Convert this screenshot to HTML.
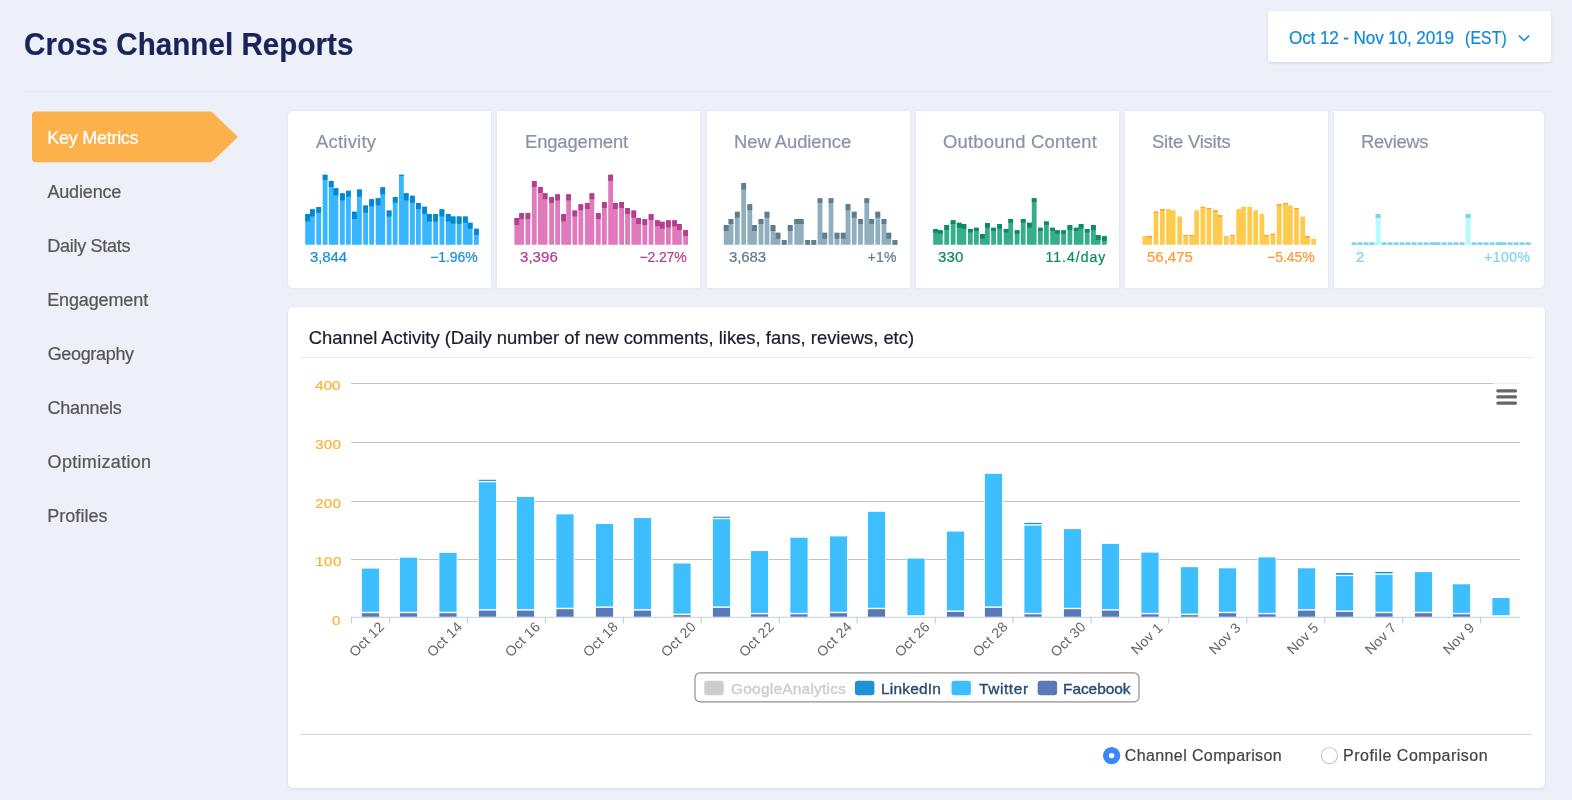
<!DOCTYPE html>
<html lang="en"><head><meta charset="utf-8"><title>Cross Channel Reports</title>
<style>
html,body{margin:0;padding:0;}
body{width:1572px;height:800px;overflow:hidden;background:#edf0f8;font-family:"Liberation Sans", sans-serif;position:relative;}
.t{position:absolute;white-space:nowrap;line-height:1;-webkit-text-stroke:0.22px;}
#tx{position:absolute;left:0;top:0;width:1572px;height:800px;will-change:transform;}
.abs{position:absolute;}
.card{position:absolute;background:#fff;box-shadow:0 0 3px rgba(0,0,0,.07);}
svg{position:absolute;left:0;top:0;overflow:visible;will-change:transform;}
svg text{font-family:"Liberation Sans", sans-serif;}
</style></head><body>
<div class="abs" style="left:25px;top:91px;width:1526px;height:1px;background:#e1e3e8;"></div>
<div class="card" style="left:1268px;top:11px;width:283px;height:51px;border-radius:3px;box-shadow:0 1px 3px rgba(0,0,0,.13);"></div>
<div class="card" style="left:287.9px;top:110.7px;width:203.5px;height:177.4px;border-radius:5px 0 0 5px;"></div>
<div class="card" style="left:497.1px;top:110.7px;width:203.3px;height:177.4px;border-radius:0;"></div>
<div class="card" style="left:706.5px;top:110.7px;width:203.3px;height:177.4px;border-radius:0;"></div>
<div class="card" style="left:915.9px;top:110.7px;width:203.3px;height:177.4px;border-radius:0;"></div>
<div class="card" style="left:1125.2px;top:110.7px;width:203.2px;height:177.4px;border-radius:0;"></div>
<div class="card" style="left:1334.4px;top:110.7px;width:209.6px;height:177.4px;border-radius:0 5px 5px 0;"></div>
<div class="card" style="left:287.9px;top:306.5px;width:1257.0px;height:481px;border-radius:5px;box-shadow:0 1px 3px rgba(0,0,0,.10);"></div>
<div class="abs" style="left:300.5px;top:357px;width:1232px;height:1.2px;background:#e3e8fb;"></div>
<div class="abs" style="left:300.2px;top:733.5px;width:1232.3px;height:1px;background:#d6d6d6;"></div>
<svg width="1572" height="800" viewBox="0 0 1572 800">
<path d="M36 111.6H209.8Q211.8 111.6 213.1 113L238 136.9L213.1 160.8Q211.8 162.2 209.8 162.2H36Q32 162.2 32 158.2V115.6Q32 111.6 36 111.6Z" fill="#fcb14b"/>
<path d="M1519 35.6L1524.1 40.5L1529.2 35.6" fill="none" stroke="#0e8ad8" stroke-width="1.5"/>
<path fill="#38b6ff" d="M309.4 221.5h1.2V244.8h-1.2zM305.2 214.0h4.8V244.8h-4.8zM310.0 209.2h4.8V244.8h-4.8zM316.3 207.0h4.8V244.8h-4.8zM322.7 174.8h4.8V244.8h-4.8zM333.0 195.5h1.2V244.8h-1.2zM328.8 181.0h4.8V244.8h-4.8zM333.5 188.3h4.8V244.8h-4.8zM340.0 193.2h4.8V244.8h-4.8zM346.0 190.8h4.8V244.8h-4.8zM356.2 219.0h1.2V244.8h-1.2zM352.0 211.7h4.8V244.8h-4.8zM357.0 189.5h4.8V244.8h-4.8zM363.2 205.5h4.8V244.8h-4.8zM369.2 199.3h4.8V244.8h-4.8zM379.9 205.2h1.2V244.8h-1.2zM375.7 198.3h4.8V244.8h-4.8zM380.3 187.2h4.8V244.8h-4.8zM386.7 210.5h4.8V244.8h-4.8zM392.8 197.0h4.8V244.8h-4.8zM403.2 200.5h1.2V244.8h-1.2zM399.0 174.8h4.8V244.8h-4.8zM403.8 193.2h4.8V244.8h-4.8zM410.0 195.8h4.8V244.8h-4.8zM416.0 203.0h4.8V244.8h-4.8zM426.4 221.5h1.2V244.8h-1.2zM422.2 206.8h4.8V244.8h-4.8zM427.0 214.0h4.8V244.8h-4.8zM433.2 214.0h4.8V244.8h-4.8zM439.5 209.2h4.8V244.8h-4.8zM450.0 223.8h1.2V244.8h-1.2zM445.8 214.0h4.8V244.8h-4.8zM450.7 216.5h4.8V244.8h-4.8zM456.8 216.5h4.8V244.8h-4.8zM467.2 228.8h1.2V244.8h-1.2zM463.0 216.5h4.8V244.8h-4.8zM467.8 222.8h4.8V244.8h-4.8zM474.0 228.8h4.8V244.8h-4.8z"/>
<path fill="#0288d1" d="M305.2 214.0h4.8V221.5h-4.8zM310.0 209.2h4.8V216.5h-4.8zM316.3 207.0h4.8V213.0h-4.8zM322.7 174.8h4.8V180.0h-4.8zM328.8 181.0h4.8V187.0h-4.8zM333.5 188.3h4.8V195.5h-4.8zM340.0 193.2h4.8V200.5h-4.8zM346.0 190.8h4.8V196.8h-4.8zM352.0 211.7h4.8V219.0h-4.8zM357.0 189.5h4.8V196.8h-4.8zM363.2 205.5h4.8V212.8h-4.8zM369.2 199.3h4.8V206.5h-4.8zM375.7 198.3h4.8V205.2h-4.8zM380.3 187.2h4.8V194.3h-4.8zM386.7 210.5h4.8V216.5h-4.8zM392.8 197.0h4.8V202.8h-4.8zM399.0 174.8h4.8V176.0h-4.8zM403.8 193.2h4.8V200.5h-4.8zM410.0 195.8h4.8V202.8h-4.8zM416.0 203.0h4.8V209.0h-4.8zM422.2 206.8h4.8V214.0h-4.8zM427.0 214.0h4.8V221.5h-4.8zM433.2 214.0h4.8V221.5h-4.8zM439.5 209.2h4.8V216.5h-4.8zM445.8 214.0h4.8V221.5h-4.8zM450.7 216.5h4.8V223.8h-4.8zM456.8 216.5h4.8V223.8h-4.8zM463.0 216.5h4.8V222.8h-4.8zM467.8 222.8h4.8V228.8h-4.8zM474.0 228.8h4.8V235.0h-4.8z"/>
<path fill="#e07abd" d="M518.6 225.0h1.2V244.8h-1.2zM514.4 218.0h4.8V244.8h-4.8zM519.2 213.0h4.8V244.8h-4.8zM525.5 213.0h4.8V244.8h-4.8zM531.9 181.0h4.8V244.8h-4.8zM542.2 199.3h1.2V244.8h-1.2zM538.0 187.0h4.8V244.8h-4.8zM542.7 193.2h4.8V244.8h-4.8zM549.2 197.0h4.8V244.8h-4.8zM555.2 194.3h4.8V244.8h-4.8zM565.4 221.5h1.2V244.8h-1.2zM561.2 214.0h4.8V244.8h-4.8zM566.2 194.3h4.8V244.8h-4.8zM572.4 210.5h4.8V244.8h-4.8zM578.4 204.3h4.8V244.8h-4.8zM589.1 209.0h1.2V244.8h-1.2zM584.9 203.0h4.8V244.8h-4.8zM589.5 193.2h4.8V244.8h-4.8zM595.9 213.0h4.8V244.8h-4.8zM602.0 202.0h4.8V244.8h-4.8zM612.4 209.0h1.2V244.8h-1.2zM608.2 174.8h4.8V244.8h-4.8zM613.0 203.0h4.8V244.8h-4.8zM619.2 202.0h4.8V244.8h-4.8zM625.2 208.0h4.8V244.8h-4.8zM635.6 224.0h1.2V244.8h-1.2zM631.4 210.5h4.8V244.8h-4.8zM636.2 218.0h4.8V244.8h-4.8zM642.4 219.0h4.8V244.8h-4.8zM648.7 214.0h4.8V244.8h-4.8zM659.2 228.8h1.2V244.8h-1.2zM655.0 220.3h4.8V244.8h-4.8zM659.9 221.8h4.8V244.8h-4.8zM666.0 220.3h4.8V244.8h-4.8zM676.4 230.0h1.2V244.8h-1.2zM672.2 220.3h4.8V244.8h-4.8zM677.0 224.0h4.8V244.8h-4.8zM683.2 230.0h4.8V244.8h-4.8z"/>
<path fill="#b2408f" d="M514.4 218.0h4.8V225.0h-4.8zM519.2 213.0h4.8V219.0h-4.8zM525.5 213.0h4.8V219.0h-4.8zM531.9 181.0h4.8V187.0h-4.8zM538.0 187.0h4.8V193.0h-4.8zM542.7 193.2h4.8V199.3h-4.8zM549.2 197.0h4.8V203.0h-4.8zM555.2 194.3h4.8V200.5h-4.8zM561.2 214.0h4.8V221.5h-4.8zM566.2 194.3h4.8V200.5h-4.8zM572.4 210.5h4.8V216.5h-4.8zM578.4 204.3h4.8V210.3h-4.8zM584.9 203.0h4.8V209.0h-4.8zM589.5 193.2h4.8V199.3h-4.8zM595.9 213.0h4.8V219.0h-4.8zM602.0 202.0h4.8V208.0h-4.8zM608.2 174.8h4.8V181.0h-4.8zM613.0 203.0h4.8V209.0h-4.8zM619.2 202.0h4.8V208.0h-4.8zM625.2 208.0h4.8V214.0h-4.8zM631.4 210.5h4.8V217.8h-4.8zM636.2 218.0h4.8V224.0h-4.8zM642.4 219.0h4.8V225.0h-4.8zM648.7 214.0h4.8V220.0h-4.8zM655.0 220.3h4.8V226.3h-4.8zM659.9 221.8h4.8V228.8h-4.8zM666.0 220.3h4.8V227.5h-4.8zM672.2 220.3h4.8V226.3h-4.8zM677.0 224.0h4.8V230.0h-4.8zM683.2 230.0h4.8V236.0h-4.8z"/>
<path fill="#90aebd" d="M728.0 231.0h1.2V244.8h-1.2zM723.8 225.0h4.8V244.8h-4.8zM728.6 219.0h4.8V244.8h-4.8zM734.9 211.7h4.8V244.8h-4.8zM741.3 183.0h4.8V244.8h-4.8zM751.6 231.0h1.2V244.8h-1.2zM747.4 204.3h4.8V244.8h-4.8zM752.1 225.0h4.8V244.8h-4.8zM758.6 219.0h4.8V244.8h-4.8zM764.6 211.7h4.8V244.8h-4.8zM774.8 238.8h1.2V244.8h-1.2zM770.6 225.0h4.8V244.8h-4.8zM775.6 232.8h4.8V244.8h-4.8zM781.8 240.0h4.8V244.8h-4.8zM787.8 225.0h4.8V244.8h-4.8zM798.5 224.0h1.2V244.8h-1.2zM794.3 219.0h4.8V244.8h-4.8zM798.9 219.0h4.8V244.8h-4.8zM805.3 240.0h4.8V244.8h-4.8zM811.4 240.0h4.8V244.8h-4.8zM821.8 238.8h1.2V244.8h-1.2zM817.6 198.3h4.8V244.8h-4.8zM822.4 232.8h4.8V244.8h-4.8zM828.6 198.3h4.8V244.8h-4.8zM834.6 232.8h4.8V244.8h-4.8zM845.0 238.8h1.2V244.8h-1.2zM840.8 232.8h4.8V244.8h-4.8zM845.6 204.3h4.8V244.8h-4.8zM851.8 211.7h4.8V244.8h-4.8zM858.1 219.0h4.8V244.8h-4.8zM868.6 224.0h1.2V244.8h-1.2zM864.4 198.3h4.8V244.8h-4.8zM869.3 219.0h4.8V244.8h-4.8zM875.4 211.7h4.8V244.8h-4.8zM885.8 238.8h1.2V244.8h-1.2zM881.6 219.0h4.8V244.8h-4.8zM886.4 232.8h4.8V244.8h-4.8zM892.6 240.0h4.8V244.8h-4.8z"/>
<path fill="#607d8b" d="M723.8 225.0h4.8V231.0h-4.8zM728.6 219.0h4.8V224.0h-4.8zM734.9 211.7h4.8V217.8h-4.8zM741.3 183.0h4.8V189.5h-4.8zM747.4 204.3h4.8V210.3h-4.8zM752.1 225.0h4.8V231.0h-4.8zM758.6 219.0h4.8V224.0h-4.8zM764.6 211.7h4.8V217.8h-4.8zM770.6 225.0h4.8V231.0h-4.8zM775.6 232.8h4.8V238.8h-4.8zM781.8 240.0h4.8V244.8h-4.8zM787.8 225.0h4.8V231.0h-4.8zM794.3 219.0h4.8V224.0h-4.8zM798.9 219.0h4.8V224.0h-4.8zM805.3 240.0h4.8V244.8h-4.8zM811.4 240.0h4.8V244.8h-4.8zM817.6 198.3h4.8V203.0h-4.8zM822.4 232.8h4.8V238.8h-4.8zM828.6 198.3h4.8V203.0h-4.8zM834.6 232.8h4.8V238.8h-4.8zM840.8 232.8h4.8V238.8h-4.8zM845.6 204.3h4.8V210.3h-4.8zM851.8 211.7h4.8V217.8h-4.8zM858.1 219.0h4.8V224.0h-4.8zM864.4 198.3h4.8V203.0h-4.8zM869.3 219.0h4.8V224.0h-4.8zM875.4 211.7h4.8V217.8h-4.8zM881.6 219.0h4.8V224.0h-4.8zM886.4 232.8h4.8V238.8h-4.8zM892.6 240.0h4.8V244.8h-4.8z"/>
<path fill="#36ae8c" d="M937.4 233.8h1.2V244.8h-1.2zM933.2 229.0h4.8V244.8h-4.8zM938.0 230.2h4.8V244.8h-4.8zM944.3 225.0h4.8V244.8h-4.8zM950.7 220.3h4.8V244.8h-4.8zM961.0 228.8h1.2V244.8h-1.2zM956.8 222.8h4.8V244.8h-4.8zM961.5 224.0h4.8V244.8h-4.8zM968.0 229.0h4.8V244.8h-4.8zM974.0 227.8h4.8V244.8h-4.8zM984.2 238.8h1.2V244.8h-1.2zM980.0 234.0h4.8V244.8h-4.8zM985.0 223.0h4.8V244.8h-4.8zM991.2 227.8h4.8V244.8h-4.8zM997.2 224.0h4.8V244.8h-4.8zM1007.9 232.5h1.2V244.8h-1.2zM1003.7 229.0h4.8V244.8h-4.8zM1008.3 219.0h4.8V244.8h-4.8zM1014.7 230.2h4.8V244.8h-4.8zM1020.8 219.0h4.8V244.8h-4.8zM1031.2 227.8h1.2V244.8h-1.2zM1027.0 222.8h4.8V244.8h-4.8zM1031.8 198.3h4.8V244.8h-4.8zM1038.0 227.8h4.8V244.8h-4.8zM1044.0 221.5h4.8V244.8h-4.8zM1054.4 233.8h1.2V244.8h-1.2zM1050.2 227.8h4.8V244.8h-4.8zM1055.0 230.2h4.8V244.8h-4.8zM1061.2 230.2h4.8V244.8h-4.8zM1067.5 225.0h4.8V244.8h-4.8zM1078.0 231.0h1.2V244.8h-1.2zM1073.8 227.8h4.8V244.8h-4.8zM1078.7 224.0h4.8V244.8h-4.8zM1084.8 229.0h4.8V244.8h-4.8zM1095.2 240.0h1.2V244.8h-1.2zM1091.0 225.0h4.8V244.8h-4.8zM1095.8 235.0h4.8V244.8h-4.8zM1102.0 236.2h4.8V244.8h-4.8z"/>
<path fill="#088c63" d="M933.2 229.0h4.8V232.8h-4.8zM938.0 230.2h4.8V233.8h-4.8zM944.3 225.0h4.8V230.0h-4.8zM950.7 220.3h4.8V224.0h-4.8zM956.8 222.8h4.8V227.8h-4.8zM961.5 224.0h4.8V228.8h-4.8zM968.0 229.0h4.8V232.5h-4.8zM974.0 227.8h4.8V231.0h-4.8zM980.0 234.0h4.8V238.8h-4.8zM985.0 223.0h4.8V227.8h-4.8zM991.2 227.8h4.8V231.0h-4.8zM997.2 224.0h4.8V228.8h-4.8zM1003.7 229.0h4.8V232.5h-4.8zM1008.3 219.0h4.8V222.8h-4.8zM1014.7 230.2h4.8V233.8h-4.8zM1020.8 219.0h4.8V222.8h-4.8zM1027.0 222.8h4.8V227.8h-4.8zM1031.8 198.3h4.8V202.0h-4.8zM1038.0 227.8h4.8V231.0h-4.8zM1044.0 221.5h4.8V225.0h-4.8zM1050.2 227.8h4.8V231.0h-4.8zM1055.0 230.2h4.8V233.8h-4.8zM1061.2 230.2h4.8V233.8h-4.8zM1067.5 225.0h4.8V230.0h-4.8zM1073.8 227.8h4.8V231.0h-4.8zM1078.7 224.0h4.8V228.8h-4.8zM1084.8 229.0h4.8V232.5h-4.8zM1091.0 225.0h4.8V230.0h-4.8zM1095.8 235.0h4.8V240.0h-4.8zM1102.0 236.2h4.8V241.0h-4.8z"/>
<path fill="#ffcb4f" d="M1146.7 237.5h1.2V244.8h-1.2zM1142.5 236.0h4.8V244.8h-4.8zM1147.3 236.0h4.8V244.8h-4.8zM1153.6 211.5h4.8V244.8h-4.8zM1160.0 209.2h4.8V244.8h-4.8zM1170.3 210.3h1.2V244.8h-1.2zM1166.1 209.0h4.8V244.8h-4.8zM1170.8 210.3h4.8V244.8h-4.8zM1177.3 216.5h4.8V244.8h-4.8zM1183.3 235.0h4.8V244.8h-4.8zM1193.5 236.0h1.2V244.8h-1.2zM1189.3 235.0h4.8V244.8h-4.8zM1194.3 210.3h4.8V244.8h-4.8zM1200.5 206.8h4.8V244.8h-4.8zM1206.5 208.0h4.8V244.8h-4.8zM1217.2 216.8h1.2V244.8h-1.2zM1213.0 210.3h4.8V244.8h-4.8zM1217.6 215.3h4.8V244.8h-4.8zM1224.0 236.0h4.8V244.8h-4.8zM1230.1 235.0h4.8V244.8h-4.8zM1240.5 209.2h1.2V244.8h-1.2zM1236.3 209.2h4.8V244.8h-4.8zM1241.1 206.8h4.8V244.8h-4.8zM1247.3 206.8h4.8V244.8h-4.8zM1253.3 210.3h4.8V244.8h-4.8zM1263.7 236.0h1.2V244.8h-1.2zM1259.5 214.0h4.8V244.8h-4.8zM1264.3 235.0h4.8V244.8h-4.8zM1270.5 233.8h4.8V244.8h-4.8zM1276.8 204.3h4.8V244.8h-4.8zM1287.3 205.5h1.2V244.8h-1.2zM1283.1 203.0h4.8V244.8h-4.8zM1288.0 205.5h4.8V244.8h-4.8zM1294.1 208.0h4.8V244.8h-4.8zM1304.5 237.7h1.2V244.8h-1.2zM1300.3 216.5h4.8V244.8h-4.8zM1305.1 236.2h4.8V244.8h-4.8zM1311.3 238.8h4.8V244.8h-4.8z"/>
<path fill="#ffa030" d="M1147.3 236.0h4.8V237.5h-4.8zM1153.6 211.5h4.8V212.7h-4.8zM1160.0 209.2h4.8V210.7h-4.8zM1183.3 235.0h4.8V236.0h-4.8zM1189.3 235.0h4.8V236.0h-4.8zM1200.5 206.8h4.8V207.8h-4.8zM1206.5 208.0h4.8V209.0h-4.8zM1213.0 210.3h4.8V211.8h-4.8zM1217.6 215.3h4.8V216.8h-4.8zM1230.1 235.0h4.8V236.0h-4.8zM1264.3 235.0h4.8V236.0h-4.8zM1270.5 233.8h4.8V234.8h-4.8zM1276.8 204.3h4.8V205.8h-4.8zM1283.1 203.0h4.8V204.2h-4.8zM1294.1 208.0h4.8V209.0h-4.8zM1305.1 236.2h4.8V237.7h-4.8z"/>
<rect x="1375.6" y="214.1" width="5" height="30.8" fill="#b5fbfb"/>
<rect x="1375.6" y="214.1" width="5" height="3.8" fill="#7fd0ea"/>
<rect x="1465.6" y="214.1" width="5" height="30.8" fill="#b5fbfb"/>
<rect x="1465.6" y="214.1" width="5" height="3.8" fill="#7fd0ea"/>
<path fill="#7fd3ef" d="M1351.6 242.3h5.0v2.6h-5.0zM1357.6 242.3h5.0v2.6h-5.0zM1363.6 242.3h5.0v2.6h-5.0zM1369.6 242.3h5.0v2.6h-5.0zM1381.6 242.3h5.0v2.6h-5.0zM1387.6 242.3h5.0v2.6h-5.0zM1393.6 242.3h5.0v2.6h-5.0zM1399.6 242.3h5.0v2.6h-5.0zM1405.6 242.3h5.0v2.6h-5.0zM1411.6 242.3h5.0v2.6h-5.0zM1417.6 242.3h5.0v2.6h-5.0zM1423.6 242.3h5.0v2.6h-5.0zM1429.6 242.3h6.0v2.6h-6.0zM1435.6 242.3h5.0v2.6h-5.0zM1441.6 242.3h5.0v2.6h-5.0zM1447.6 242.3h5.0v2.6h-5.0zM1453.6 242.3h5.0v2.6h-5.0zM1459.6 242.3h5.0v2.6h-5.0zM1471.6 242.3h5.0v2.6h-5.0zM1477.6 242.3h5.0v2.6h-5.0zM1483.6 242.3h5.0v2.6h-5.0zM1489.6 242.3h5.0v2.6h-5.0zM1495.6 242.3h6.0v2.6h-6.0zM1501.6 242.3h5.0v2.6h-5.0zM1507.6 242.3h5.0v2.6h-5.0zM1513.6 242.3h5.0v2.6h-5.0zM1519.6 242.3h5.0v2.6h-5.0zM1525.6 242.3h5.0v2.6h-5.0z"/>
<path d="M351.2 383.5H1520.2" stroke="#c2c2c2" stroke-width="1"/>
<path d="M351.2 442.5H1520.2" stroke="#c2c2c2" stroke-width="1"/>
<path d="M351.2 501.5H1520.2" stroke="#c2c2c2" stroke-width="1"/>
<path d="M351.2 559.5H1520.2" stroke="#c2c2c2" stroke-width="1"/>
<rect x="361.10" y="567.80" width="18.80" height="49.00" fill="#fff"/>
<rect x="361.90" y="568.60" width="17.20" height="43.15" fill="#3dbeff"/>
<rect x="361.90" y="613.20" width="17.20" height="3.60" fill="#5878b8"/>
<rect x="399.10" y="556.90" width="18.80" height="59.90" fill="#fff"/>
<rect x="399.90" y="557.70" width="17.20" height="54.05" fill="#3dbeff"/>
<rect x="399.90" y="613.20" width="17.20" height="3.60" fill="#5878b8"/>
<rect x="438.60" y="552.10" width="18.80" height="64.70" fill="#fff"/>
<rect x="439.40" y="552.90" width="17.20" height="58.85" fill="#3dbeff"/>
<rect x="439.40" y="613.20" width="17.20" height="3.60" fill="#5878b8"/>
<rect x="478.10" y="479.00" width="18.80" height="137.80" fill="#fff"/>
<rect x="478.90" y="479.80" width="17.20" height="1.10" fill="#1e90d6"/>
<rect x="478.90" y="482.30" width="17.20" height="126.85" fill="#3dbeff"/>
<rect x="478.90" y="610.60" width="17.20" height="6.20" fill="#5878b8"/>
<rect x="516.10" y="496.20" width="18.80" height="120.60" fill="#fff"/>
<rect x="516.90" y="497.00" width="17.20" height="112.15" fill="#3dbeff"/>
<rect x="516.90" y="610.60" width="17.20" height="6.20" fill="#5878b8"/>
<rect x="555.60" y="513.50" width="18.80" height="103.30" fill="#fff"/>
<rect x="556.40" y="514.30" width="17.20" height="93.45" fill="#3dbeff"/>
<rect x="556.40" y="609.20" width="17.20" height="7.60" fill="#5878b8"/>
<rect x="595.10" y="523.20" width="18.80" height="93.60" fill="#fff"/>
<rect x="595.90" y="524.00" width="17.20" height="82.45" fill="#3dbeff"/>
<rect x="595.90" y="607.90" width="17.20" height="8.90" fill="#5878b8"/>
<rect x="633.10" y="517.20" width="18.80" height="99.60" fill="#fff"/>
<rect x="633.90" y="518.00" width="17.20" height="91.15" fill="#3dbeff"/>
<rect x="633.90" y="610.60" width="17.20" height="6.20" fill="#5878b8"/>
<rect x="672.60" y="562.70" width="18.80" height="54.10" fill="#fff"/>
<rect x="673.40" y="563.50" width="17.20" height="50.15" fill="#3dbeff"/>
<rect x="673.40" y="615.10" width="17.20" height="1.70" fill="#5878b8"/>
<rect x="712.10" y="515.90" width="18.80" height="100.90" fill="#fff"/>
<rect x="712.90" y="516.70" width="17.20" height="1.10" fill="#1e90d6"/>
<rect x="712.90" y="519.20" width="17.20" height="87.25" fill="#3dbeff"/>
<rect x="712.90" y="607.90" width="17.20" height="8.90" fill="#5878b8"/>
<rect x="750.10" y="550.30" width="18.80" height="66.50" fill="#fff"/>
<rect x="750.90" y="551.10" width="17.20" height="61.75" fill="#3dbeff"/>
<rect x="750.90" y="614.30" width="17.20" height="2.50" fill="#5878b8"/>
<rect x="789.60" y="536.90" width="18.80" height="79.90" fill="#fff"/>
<rect x="790.40" y="537.70" width="17.20" height="75.15" fill="#3dbeff"/>
<rect x="790.40" y="614.30" width="17.20" height="2.50" fill="#5878b8"/>
<rect x="829.10" y="535.60" width="18.80" height="81.20" fill="#fff"/>
<rect x="829.90" y="536.40" width="17.20" height="75.35" fill="#3dbeff"/>
<rect x="829.90" y="613.20" width="17.20" height="3.60" fill="#5878b8"/>
<rect x="867.10" y="511.00" width="18.80" height="105.80" fill="#fff"/>
<rect x="867.90" y="511.80" width="17.20" height="95.95" fill="#3dbeff"/>
<rect x="867.90" y="609.20" width="17.20" height="7.60" fill="#5878b8"/>
<rect x="906.60" y="557.80" width="18.80" height="59.00" fill="#fff"/>
<rect x="907.40" y="558.60" width="17.20" height="56.60" fill="#3dbeff"/>
<rect x="946.10" y="530.80" width="18.80" height="86.00" fill="#fff"/>
<rect x="946.90" y="531.60" width="17.20" height="78.85" fill="#3dbeff"/>
<rect x="946.90" y="611.90" width="17.20" height="4.90" fill="#5878b8"/>
<rect x="984.10" y="473.00" width="18.80" height="143.80" fill="#fff"/>
<rect x="984.90" y="473.80" width="17.20" height="132.65" fill="#3dbeff"/>
<rect x="984.90" y="607.90" width="17.20" height="8.90" fill="#5878b8"/>
<rect x="1023.60" y="522.10" width="18.80" height="94.70" fill="#fff"/>
<rect x="1024.40" y="522.90" width="17.20" height="1.30" fill="#1e90d6"/>
<rect x="1024.40" y="525.60" width="17.20" height="87.25" fill="#3dbeff"/>
<rect x="1024.40" y="614.30" width="17.20" height="2.50" fill="#5878b8"/>
<rect x="1063.10" y="528.30" width="18.80" height="88.50" fill="#fff"/>
<rect x="1063.90" y="529.10" width="17.20" height="78.65" fill="#3dbeff"/>
<rect x="1063.90" y="609.20" width="17.20" height="7.60" fill="#5878b8"/>
<rect x="1101.10" y="543.10" width="18.80" height="73.70" fill="#fff"/>
<rect x="1101.90" y="543.90" width="17.20" height="65.25" fill="#3dbeff"/>
<rect x="1101.90" y="610.60" width="17.20" height="6.20" fill="#5878b8"/>
<rect x="1140.60" y="551.80" width="18.80" height="65.00" fill="#fff"/>
<rect x="1141.40" y="552.60" width="17.20" height="60.25" fill="#3dbeff"/>
<rect x="1141.40" y="614.30" width="17.20" height="2.50" fill="#5878b8"/>
<rect x="1180.10" y="566.40" width="18.80" height="50.40" fill="#fff"/>
<rect x="1180.90" y="567.20" width="17.20" height="46.45" fill="#3dbeff"/>
<rect x="1180.90" y="615.10" width="17.20" height="1.70" fill="#5878b8"/>
<rect x="1218.10" y="567.50" width="18.80" height="49.30" fill="#fff"/>
<rect x="1218.90" y="568.30" width="17.20" height="43.45" fill="#3dbeff"/>
<rect x="1218.90" y="613.20" width="17.20" height="3.60" fill="#5878b8"/>
<rect x="1257.60" y="556.60" width="18.80" height="60.20" fill="#fff"/>
<rect x="1258.40" y="557.40" width="17.20" height="55.45" fill="#3dbeff"/>
<rect x="1258.40" y="614.30" width="17.20" height="2.50" fill="#5878b8"/>
<rect x="1297.10" y="567.50" width="18.80" height="49.30" fill="#fff"/>
<rect x="1297.90" y="568.30" width="17.20" height="40.85" fill="#3dbeff"/>
<rect x="1297.90" y="610.60" width="17.20" height="6.20" fill="#5878b8"/>
<rect x="1335.10" y="572.20" width="18.80" height="44.60" fill="#fff"/>
<rect x="1335.90" y="573.00" width="17.20" height="1.70" fill="#1e90d6"/>
<rect x="1335.90" y="576.10" width="17.20" height="34.35" fill="#3dbeff"/>
<rect x="1335.90" y="611.90" width="17.20" height="4.90" fill="#5878b8"/>
<rect x="1374.60" y="571.10" width="18.80" height="45.70" fill="#fff"/>
<rect x="1375.40" y="571.90" width="17.20" height="1.50" fill="#1e90d6"/>
<rect x="1375.40" y="574.80" width="17.20" height="36.95" fill="#3dbeff"/>
<rect x="1375.40" y="613.20" width="17.20" height="3.60" fill="#5878b8"/>
<rect x="1414.10" y="571.30" width="18.80" height="45.50" fill="#fff"/>
<rect x="1414.90" y="572.10" width="17.20" height="39.65" fill="#3dbeff"/>
<rect x="1414.90" y="613.20" width="17.20" height="3.60" fill="#5878b8"/>
<rect x="1452.10" y="583.50" width="18.80" height="33.30" fill="#fff"/>
<rect x="1452.90" y="584.30" width="17.20" height="28.55" fill="#3dbeff"/>
<rect x="1452.90" y="614.30" width="17.20" height="2.50" fill="#5878b8"/>
<rect x="1491.60" y="597.20" width="18.80" height="19.60" fill="#fff"/>
<rect x="1492.40" y="598.00" width="17.20" height="17.20" fill="#3dbeff"/>
<path d="M351.2 617.3H1520.2" stroke="#c0d0e0" stroke-width="1"/>
<path d="M351.4 616.8v6.8M389.6 616.8v6.8M467.5 616.8v6.8M545.4 616.8v6.8M623.4 616.8v6.8M701.3 616.8v6.8M779.2 616.8v6.8M857.2 616.8v6.8M935.1 616.8v6.8M1013.0 616.8v6.8M1091.0 616.8v6.8M1168.9 616.8v6.8M1246.8 616.8v6.8M1324.8 616.8v6.8M1402.7 616.8v6.8M1480.6 616.8v6.8" stroke="#c0d0e0" stroke-width="1.1" fill="none"/>
<text transform="translate(385.2 627.6) rotate(-45)" text-anchor="end" font-size="14" fill="#666" style="letter-spacing:0.25px">Oct 12</text>
<text transform="translate(463.1 627.6) rotate(-45)" text-anchor="end" font-size="14" fill="#666" style="letter-spacing:0.25px">Oct 14</text>
<text transform="translate(541.1 627.6) rotate(-45)" text-anchor="end" font-size="14" fill="#666" style="letter-spacing:0.25px">Oct 16</text>
<text transform="translate(619.0 627.6) rotate(-45)" text-anchor="end" font-size="14" fill="#666" style="letter-spacing:0.25px">Oct 18</text>
<text transform="translate(696.9 627.6) rotate(-45)" text-anchor="end" font-size="14" fill="#666" style="letter-spacing:0.25px">Oct 20</text>
<text transform="translate(774.9 627.6) rotate(-45)" text-anchor="end" font-size="14" fill="#666" style="letter-spacing:0.25px">Oct 22</text>
<text transform="translate(852.8 627.6) rotate(-45)" text-anchor="end" font-size="14" fill="#666" style="letter-spacing:0.25px">Oct 24</text>
<text transform="translate(930.7 627.6) rotate(-45)" text-anchor="end" font-size="14" fill="#666" style="letter-spacing:0.25px">Oct 26</text>
<text transform="translate(1008.7 627.6) rotate(-45)" text-anchor="end" font-size="14" fill="#666" style="letter-spacing:0.25px">Oct 28</text>
<text transform="translate(1086.6 627.6) rotate(-45)" text-anchor="end" font-size="14" fill="#666" style="letter-spacing:0.25px">Oct 30</text>
<text transform="translate(1163.6 628.5) rotate(-45)" text-anchor="end" font-size="14" fill="#666" style="letter-spacing:0.25px">Nov 1</text>
<text transform="translate(1241.6 628.5) rotate(-45)" text-anchor="end" font-size="14" fill="#666" style="letter-spacing:0.25px">Nov 3</text>
<text transform="translate(1319.5 628.5) rotate(-45)" text-anchor="end" font-size="14" fill="#666" style="letter-spacing:0.25px">Nov 5</text>
<text transform="translate(1397.4 628.5) rotate(-45)" text-anchor="end" font-size="14" fill="#666" style="letter-spacing:0.25px">Nov 7</text>
<text transform="translate(1475.4 628.5) rotate(-45)" text-anchor="end" font-size="14" fill="#666" style="letter-spacing:0.25px">Nov 9</text>
<rect x="1492.8" y="382.5" width="28" height="26" fill="#fff" opacity="0.7"/>
<path d="M1497.8 390.8H1515.5M1497.8 396.9H1515.5M1497.8 403.1H1515.5" stroke="#666" stroke-width="3.2" stroke-linecap="round"/>
<rect x="695" y="672.9" width="444" height="29" rx="5" ry="5" fill="#fff" stroke="#909090" stroke-width="1.2"/>
<rect x="704.3" y="680.7" width="19.4" height="14.6" rx="2.8" fill="#cccccc"/>
<rect x="855.0" y="680.7" width="19.4" height="14.6" rx="2.8" fill="#1e90d6"/>
<rect x="951.5" y="680.7" width="19.4" height="14.6" rx="2.8" fill="#3dbeff"/>
<rect x="1037.7" y="680.7" width="19.4" height="14.6" rx="2.8" fill="#5878b8"/>
<circle cx="1111.6" cy="755.6" r="8.7" fill="#3b86fc"/><circle cx="1111.6" cy="755.6" r="2.7" fill="#fff"/>
<circle cx="1329.4" cy="755.6" r="8.1" fill="#fff" stroke="#c8c8c8" stroke-width="1.2"/>
</svg>
<span class="t" id="title" style="top:27px;line-height:34px;font-size:30.60px;color:#1b2459;font-weight:700;letter-spacing:0.066px;transform:scaleX(0.965);transform-origin:left 50%;left:23.80px;">Cross Channel Reports</span>
<span class="t" id="date1" style="top:28px;line-height:20px;font-size:18.00px;color:#0e8ad8;letter-spacing:-0.119px;transform:scaleX(0.950);transform-origin:left 50%;left:1288.82px;">Oct 12 - Nov 10, 2019</span>
<span class="t" id="date2" style="top:28px;line-height:20px;font-size:18.00px;color:#0e8ad8;letter-spacing:0.215px;transform:scaleX(0.870);transform-origin:left 50%;left:1464.52px;">(EST)</span>
<span class="t" id="side0" style="top:128px;line-height:20px;font-size:18.00px;color:#ffffff;letter-spacing:-0.252px;left:47.14px;">Key Metrics</span>
<span class="t" id="side1" style="top:182px;line-height:20px;font-size:18.00px;color:#565656;letter-spacing:-0.158px;left:47.40px;">Audience</span>
<span class="t" id="side2" style="top:236px;line-height:20px;font-size:18.00px;color:#565656;letter-spacing:-0.279px;left:47.24px;">Daily Stats</span>
<span class="t" id="side3" style="top:290px;line-height:20px;font-size:18.00px;color:#565656;letter-spacing:-0.119px;left:47.14px;">Engagement</span>
<span class="t" id="side4" style="top:344px;line-height:20px;font-size:18.00px;color:#565656;letter-spacing:-0.326px;left:47.64px;">Geography</span>
<span class="t" id="side5" style="top:398px;line-height:20px;font-size:18.00px;color:#565656;letter-spacing:-0.275px;left:47.56px;">Channels</span>
<span class="t" id="side6" style="top:452px;line-height:20px;font-size:18.00px;color:#565656;letter-spacing:0.321px;left:47.57px;">Optimization</span>
<span class="t" id="side7" style="top:506px;line-height:20px;font-size:18.00px;color:#565656;letter-spacing:0.062px;left:47.14px;">Profiles</span>
<span class="t" id="ct0" style="top:131px;line-height:21px;font-size:19.20px;color:#8a92a6;letter-spacing:0.240px;transform:scaleX(0.960);transform-origin:left 50%;left:315.78px;">Activity</span>
<span class="t" id="cv0a" style="top:249px;line-height:16px;font-size:14.00px;color:#1a8fd3;letter-spacing:-0.088px;transform:scaleX(1.070);transform-origin:left 50%;left:309.92px;">3,844</span>
<span class="t" id="cv0b" style="top:249px;line-height:16px;font-size:14.00px;color:#1a8fd3;letter-spacing:-0.089px;right:1094.38px;">−1.96%</span>
<span class="t" id="ct1" style="top:131px;line-height:21px;font-size:19.20px;color:#8a92a6;letter-spacing:-0.149px;transform:scaleX(0.960);transform-origin:left 50%;left:525.36px;">Engagement</span>
<span class="t" id="cv1a" style="top:249px;line-height:16px;font-size:14.00px;color:#b2408f;letter-spacing:0.059px;transform:scaleX(1.070);transform-origin:left 50%;left:519.92px;">3,396</span>
<span class="t" id="cv1b" style="top:249px;line-height:16px;font-size:14.00px;color:#b2408f;letter-spacing:-0.108px;right:885.39px;">−2.27%</span>
<span class="t" id="ct2" style="top:131px;line-height:21px;font-size:19.20px;color:#8a92a6;letter-spacing:-0.059px;transform:scaleX(0.960);transform-origin:left 50%;left:733.86px;">New Audience</span>
<span class="t" id="cv2a" style="top:249px;line-height:16px;font-size:14.00px;color:#607d8b;letter-spacing:-0.075px;transform:scaleX(1.070);transform-origin:left 50%;left:728.92px;">3,683</span>
<span class="t" id="cv2b" style="top:249px;line-height:16px;font-size:14.00px;color:#607d8b;letter-spacing:0.260px;right:675.26px;">+1%</span>
<span class="t" id="ct3" style="top:131px;line-height:21px;font-size:19.20px;color:#8a92a6;letter-spacing:0.229px;transform:scaleX(0.960);transform-origin:left 50%;left:943.24px;">Outbound Content</span>
<span class="t" id="cv3a" style="top:249px;line-height:16px;font-size:14.00px;color:#0a8a60;letter-spacing:0.144px;transform:scaleX(1.070);transform-origin:left 50%;left:937.92px;">330</span>
<span class="t" id="cv3b" style="top:249px;line-height:16px;font-size:14.00px;color:#0a8a60;letter-spacing:1.008px;right:465.73px;">11.4/day</span>
<span class="t" id="ct4" style="top:131px;line-height:21px;font-size:19.20px;color:#8a92a6;letter-spacing:-0.200px;transform:scaleX(0.960);transform-origin:left 50%;left:1152.36px;">Site Visits</span>
<span class="t" id="cv4a" style="top:249px;line-height:16px;font-size:14.00px;color:#ff9a35;letter-spacing:0.002px;transform:scaleX(1.070);transform-origin:left 50%;left:1147.08px;">56,475</span>
<span class="t" id="cv4b" style="top:249px;line-height:16px;font-size:14.00px;color:#ff9a35;letter-spacing:-0.056px;right:257.38px;">−5.45%</span>
<span class="t" id="ct5" style="top:131px;line-height:21px;font-size:19.20px;color:#8a92a6;letter-spacing:-0.368px;transform:scaleX(0.960);transform-origin:left 50%;left:1361.36px;">Reviews</span>
<span class="t" id="cv5a" style="top:249px;line-height:16px;font-size:14.00px;color:#7fd3ef;transform:scaleX(1.070);transform-origin:left 50%;left:1356.22px;">2</span>
<span class="t" id="cv5b" style="top:249px;line-height:16px;font-size:14.00px;color:#7fd3ef;letter-spacing:0.427px;right:41.70px;">+100%</span>
<span class="t" id="ctitle" style="top:327px;line-height:21px;font-size:18.40px;color:#1c1c30;letter-spacing:0.004px;left:308.69px;">Channel Activity (Daily number of new comments, likes, fans, reviews, etc)</span>
<span class="t" id="radio1" style="top:747px;line-height:17px;font-size:16.00px;color:#444444;letter-spacing:0.389px;left:1124.77px;">Channel Comparison</span>
<span class="t" id="radio2" style="top:747px;line-height:17px;font-size:16.00px;color:#444444;letter-spacing:0.509px;left:1342.97px;">Profile Comparison</span>
<span class="t" id="leg0" style="top:681px;line-height:16px;font-size:14.60px;color:#cccccc;letter-spacing:0.210px;-webkit-text-stroke:0.35px;transform:scaleX(1.060);transform-origin:left 50%;left:730.80px;">GoogleAnalytics</span>
<span class="t" id="leg1" style="top:681px;line-height:16px;font-size:14.60px;color:#274b6d;letter-spacing:0.193px;-webkit-text-stroke:0.35px;transform:scaleX(1.060);transform-origin:left 50%;left:881.40px;">LinkedIn</span>
<span class="t" id="leg2" style="top:681px;line-height:16px;font-size:14.60px;color:#274b6d;letter-spacing:0.553px;-webkit-text-stroke:0.35px;transform:scaleX(1.060);transform-origin:left 50%;left:978.74px;">Twitter</span>
<span class="t" id="leg3" style="top:681px;line-height:16px;font-size:14.60px;color:#274b6d;letter-spacing:-0.052px;-webkit-text-stroke:0.35px;transform:scaleX(1.060);transform-origin:left 50%;left:1063.40px;">Facebook</span>
<span class="t" id="yl400" style="top:378px;line-height:15px;font-size:13.50px;color:#f9b233;letter-spacing:0.004px;transform:scaleX(1.120);transform-origin:right 50%;right:1231.02px;">400</span>
<span class="t" id="yl300" style="top:437px;line-height:15px;font-size:13.50px;color:#f9b233;letter-spacing:0.186px;transform:scaleX(1.120);transform-origin:right 50%;right:1231.38px;">300</span>
<span class="t" id="yl200" style="top:496px;line-height:15px;font-size:13.50px;color:#f9b233;letter-spacing:0.211px;transform:scaleX(1.120);transform-origin:right 50%;right:1230.56px;">200</span>
<span class="t" id="yl100" style="top:554px;line-height:15px;font-size:13.50px;color:#f9b233;letter-spacing:0.422px;transform:scaleX(1.120);transform-origin:right 50%;right:1230.28px;">100</span>
<span class="t" id="yl0" style="top:613px;line-height:15px;font-size:13.50px;color:#f9b233;transform:scaleX(1.120);transform-origin:right 50%;right:1231.28px;">0</span>
</body></html>
